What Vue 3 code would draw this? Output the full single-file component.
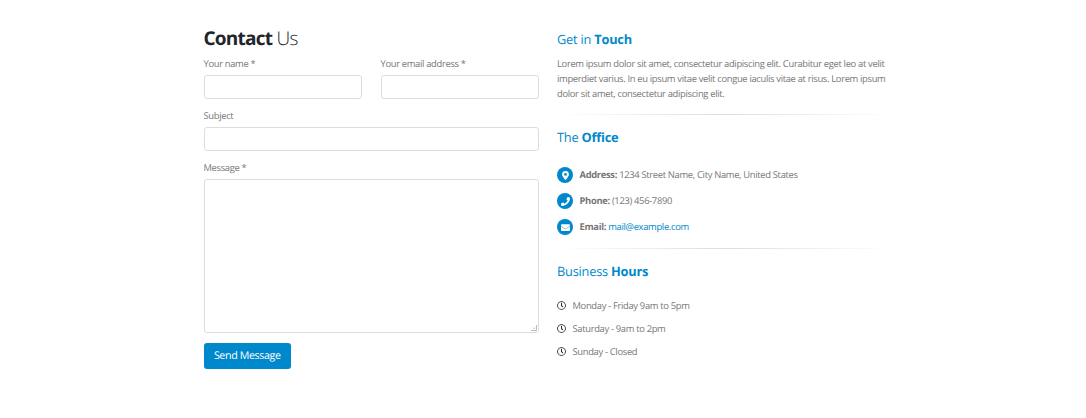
<script setup>
const hours = ['Monday - Friday 9am to 5pm', 'Saturday - 9am to 2pm', 'Sunday - Closed']
</script>

<template>
  <main class="contact">
    <form class="form" @submit.prevent>
      <h2><strong>Contact</strong> Us</h2>
      <div class="row">
        <label class="field">Your name *<input type="text" /></label>
        <label class="field">Your email address *<input type="email" /></label>
      </div>
      <label class="field">Subject<input type="text" /></label>
      <label class="field message">Message *<textarea></textarea>
        <svg class="grip" width="7" height="7" viewBox="0 0 7 7"><path d="M1 6.5H6.5V1M3.5 4.5H4.5V3.5" /></svg>
      </label>
      <button type="submit">Send Message</button>
    </form>
    <section class="info">
      <h4 class="touch">Get in <strong>Touch</strong></h4>
      <p>Lorem ipsum dolor sit amet, consectetur adipiscing elit. Curabitur eget leo at velit<br />imperdiet varius. In eu ipsum vitae velit congue iaculis vitae at risus. Lorem ipsum<br />dolor sit amet, consectetur adipiscing elit.</p>
      <hr />
      <h4>The <strong>Office</strong></h4>
      <ul class="office">
        <li>
          <span class="badge"><svg width="7" height="9" viewBox="0 0 384 512"><path d="M172 502C27 291 0 270 0 192a192 192 0 0 1 384 0c0 78-27 99-172 310a24 24 0 0 1-40 0zM192 272a80 80 0 1 0 0-160 80 80 0 0 0 0 160z" /></svg></span>
          <span><strong>Address:</strong> 1234 Street Name, City Name, United States</span>
        </li>
        <li>
          <span class="badge"><svg width="9" height="9" viewBox="0 0 512 512"><path d="M493 25 389 1a24 24 0 0 0-27 14l-48 112a24 24 0 0 0 7 28l60 50a371 371 0 0 1-177 177l-49-61a24 24 0 0 0-28-7L15 362a24 24 0 0 0-14 28l24 104a24 24 0 0 0 23 18c256 0 464-207 464-464a24 24 0 0 0-19-23z" /></svg></span>
          <span><strong>Phone:</strong> (123) 456-7890</span>
        </li>
        <li>
          <span class="badge"><svg width="9" height="9" viewBox="0 0 512 512"><path d="M502 191c4-3 10 0 10 5v204a48 48 0 0 1-48 48H48a48 48 0 0 1-48-48V196c0-5 6-8 10-5 22 17 52 40 155 114 21 16 57 48 91 48s71-33 91-48c103-74 133-97 155-114zM256 320c23 0 57-29 74-41 133-97 143-105 173-129a24 24 0 0 0 9-19v-19a48 48 0 0 0-48-48H48a48 48 0 0 0-48 48v19c0 7 3 14 9 19 31 24 41 32 173 129 17 12 51 41 74 41z" /></svg></span>
          <span><strong>Email:</strong> <a>mail@example.com</a></span>
        </li>
      </ul>
      <hr />
      <h4>Business <strong>Hours</strong></h4>
      <ul class="hours">
        <li v-for="h in hours" :key="h">
          <svg width="9" height="9" viewBox="0 0 512 512"><path d="M256 8a248 248 0 1 0 0 496 248 248 0 0 0 0-496zm0 448a200 200 0 1 1 0-400 200 200 0 0 1 0 400zm62-104-85-62a12 12 0 0 1-5-10V116a12 12 0 0 1 12-12h32a12 12 0 0 1 12 12v142l67 49a12 12 0 0 1 2 16l-18 26a12 12 0 0 1-17 3z" /></svg>
          <span>{{ h }}</span>
        </li>
      </ul>
    </section>
  </main>
</template>

<style>
body { background: #fff; }
</style>

<style scoped>
* { box-sizing: border-box; }
.contact { display: grid; grid-template-columns: 335.5px 336px; column-gap: 18px; padding: 22px 0 0 203.5px; height: 418px; font: 9.4px/15px "Open Sans", sans-serif; letter-spacing: -.32px; color: #777; text-rendering: geometricPrecision; }
h2 { margin: 0; font-size: 19px; line-height: 32px; font-weight: 300; color: #212529; letter-spacing: -0.75px; }
h2 strong { font-weight: 700; }
.row { display: grid; grid-template-columns: 158.5px 158.5px; column-gap: 18.5px; }
.field { display: block; padding-top: 2px; margin-bottom: 7px; }
.message { position: relative; margin-bottom: 10px; }
input, textarea { display: block; width: 100%; height: 24px; margin: 4px 0 0; border: 1px solid #dcdddf; border-radius: 3px; background: #fff; outline: none; }
textarea { height: 154px; resize: none; }
.grip { position: absolute; right: 2px; bottom: 2px; fill: none; stroke: #bbb; }
button { display: block; width: 87.5px; height: 26px; padding: 0; border: 0; border-radius: 3px; background: #08c; color: #fff; font: 10.7px/26px "Open Sans", sans-serif; letter-spacing: -.38px; text-rendering: geometricPrecision; }
h4 { margin: 0; font-size: 12.8px; line-height: 18px; font-weight: 400; color: #08c; letter-spacing: -.22px; }
h4 strong { font-weight: 700; }
.touch { padding-top: 8px; }
p { margin: 8px 0 13px; white-space: nowrap; }
hr { height: 1px; margin: 0 0 13px; border: 0; background: linear-gradient(to right, transparent, #ddd, transparent); }
ul { margin: 0; padding: 0; list-style: none; }
li { display: flex; align-items: center; white-space: nowrap; }
.office { padding-top: 16px; margin-bottom: 8px; }
.office li { height: 26px; }
.office li > :last-child, .hours li > :last-child { position: relative; top: -.5px; }
.badge { display: flex; width: 16px; height: 16px; margin-right: 6.5px; align-items: center; justify-content: center; border-radius: 50%; background: #08c; }
.badge svg { fill: #fff; }
a { color: #08c; }
.hours { padding-top: 14px; }
.hours li { height: 23px; }
.hours svg { margin-right: 6.5px; fill: #212529; }
</style>
